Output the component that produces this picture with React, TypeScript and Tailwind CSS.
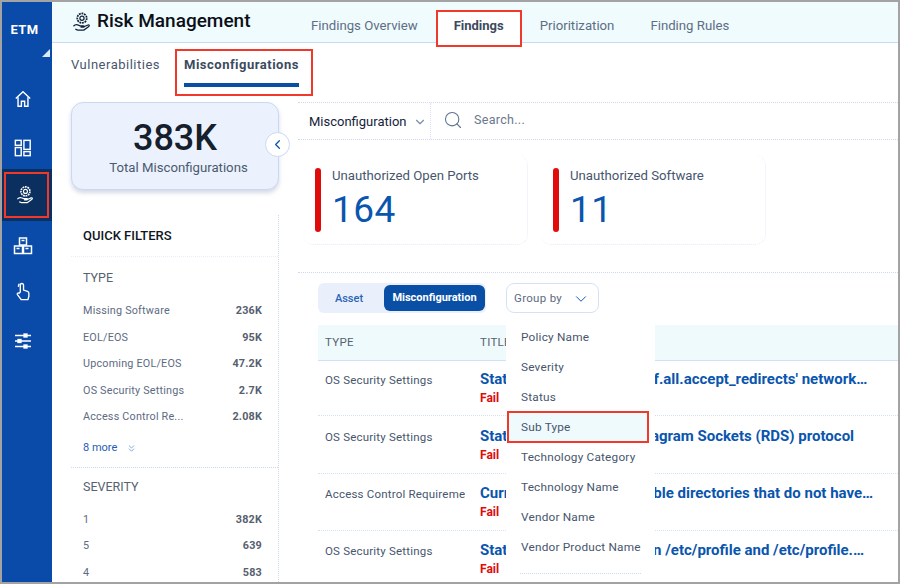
import { ChevronDown, ChevronLeft, ChevronsDown, Search } from "lucide-react";

const TOP_TABS = ["Findings Overview", "Findings", "Prioritization", "Finding Rules"];

const TYPE_FILTERS = [
  ["Missing Software", "236K"],
  ["EOL/EOS", "95K"],
  ["Upcoming EOL/EOS", "47.2K"],
  ["OS Security Settings", "2.7K"],
  ["Access Control Re...", "2.08K"],
];

const SEVERITY_FILTERS = [
  ["1", "382K"],
  ["5", "639"],
  ["4", "583"],
];

const ROWS = [
  ["OS Security Settings", "Status of the net.ipv4.conf.all.accept_redirects' network…", "h-[55px] pt-[10px]"],
  ["OS Security Settings", "Status of the Reliable Datagram Sockets (RDS) protocol", "h-[58px] pt-[12px]"],
  ["Access Control Requirements", "Current list of world-writable directories that do not have…", "h-[57px] pt-[11px]"],
  ["OS Security Settings", "Status of 'umask' setting in /etc/profile and /etc/profile.…", "h-[57px] pt-[11px]"],
];

const GROUP_OPTIONS = [
  "Policy Name",
  "Severity",
  "Status",
  "Sub Type",
  "Technology Category",
  "Technology Name",
  "Vendor Name",
  "Vendor Product Name",
];

function HandGear({ className }: { className?: string }) {
  return (
    <svg viewBox="0 0 20 20" fill="none" stroke="currentColor" strokeWidth="1.300" className={className}>
      <circle cx="10.500" cy="6" r="5" strokeDasharray="2 0.800" strokeWidth="1.800" />
      <circle cx="10.500" cy="6" r="2.200" />
      <path d="M1.500 14.500c1.500-1.600 3-2 4.500-1.400l2.500.9h3.500c1 0 1 1.500 0 1.500H9" />
      <path d="M12.500 15l4.300-1.800c1.300-.5 1.900.8.900 1.500L12.500 18.500H6L3.500 17.500" />
    </svg>
  );
}

function NavIcons() {
  return (
    <>
      <div className="h-[42px] flex items-start justify-center pr-[8px] pt-[10px] text-white">
        <svg viewBox="0 0 20 20" fill="none" stroke="currentColor" strokeWidth="1.600" className="w-[18px] h-[18px]">
          <path d="M2 9.500 10 2l8 7.500" />
          <path d="M4.500 8v10h3.700v-5.500h3.600V18h3.700V8" />
        </svg>
      </div>
      <div className="h-[47px] flex items-start justify-center pr-[8px] pt-[17px] text-white">
        <svg viewBox="0 0 20 20" fill="none" stroke="currentColor" strokeWidth="1.600" className="w-[18px] h-[18px]">
          <rect x="1.500" y="1.500" width="6.500" height="5.500" />
          <rect x="1.500" y="9.500" width="6.500" height="9" />
          <rect x="11" y="1.500" width="7" height="10" />
          <rect x="11" y="14" width="7" height="4.500" />
        </svg>
      </div>
      <div className="h-[52px] bg-[#0b2f5e] flex items-center justify-center">
        <div className="w-[45px] h-[46px] mr-[1px] border-2 border-[#f0392b] flex items-center justify-center pr-[3px] text-white">
          <HandGear className="w-[18px] h-[20px]" />
        </div>
      </div>
      <div className="h-[50px] flex items-center justify-center pr-[8px] text-white">
        <svg viewBox="0 0 20 20" fill="none" stroke="currentColor" strokeWidth="1.500" className="w-[20px] h-[20px]">
          <rect x="6.500" y="2" width="7" height="7" />
          <rect x="1.500" y="10" width="8" height="7.500" />
          <rect x="10.500" y="10" width="8" height="7.500" />
          <path d="M8.500 4.500h3M3.500 12.500h3M12.500 12.500h3" />
        </svg>
      </div>
      <div className="h-[40px] flex items-center justify-center pr-[8px] text-white">
        <svg viewBox="0 0 20 20" fill="none" stroke="currentColor" strokeWidth="1.500" className="w-[18px] h-[22px]">
          <path d="M7 11V3.500a1.800 1.800 0 0 1 3.600 0V9l4.400 1.500c1 .4 1.500 1 1.500 2V16l-1 3.500H8L3.800 14c-.8-1.200.7-2.500 1.800-1.500z" />
          <path d="M5 5.500a4 4 0 0 1 1-3.500" />
        </svg>
      </div>
      <div className="h-[44px] flex items-start justify-center pr-[8px] pt-[20px] text-white">
        <svg viewBox="0 0 20 20" fill="none" stroke="currentColor" strokeWidth="1.300" className="w-[20px] h-[20px]">
          <path d="M2 4.500h16M2 10h16M2 15.500h16" />
          <rect x="11" y="3" width="3" height="3" fill="currentColor" />
          <rect x="5" y="8.500" width="3" height="3" fill="currentColor" />
          <rect x="11" y="14" width="3" height="3" fill="currentColor" />
        </svg>
      </div>
    </>
  );
}

function FilterRow({ label, value }: { label: string; value: string }) {
  return (
    <div className="h-[26.500px] flex items-center justify-between pl-[12px] pr-[16px] text-[10.800px] tracking-[0.2px] text-[#5d6b82]">
      <span>{label}</span>
      <span className="font-bold text-[#56606f]">{value}</span>
    </div>
  );
}

function StatCard({ title, value, width }: { title: string; value: string; width: string }) {
  return (
    <div className={`${width} h-[90px] flex pl-[12px] pt-[13px] rounded-[10px] border-b border-r border-dotted border-[#e3ebf8]`}>
      <div className="w-[6px] h-[64px] rounded-full bg-[#e00c0c] shrink-0" />
      <div className="ml-[11px]">
        <div className="text-[13.200px] leading-[16px] text-[#47566e]">{title}</div>
        <div className="mt-[4px] text-[37px] leading-[44px] text-[#0a55ad] tracking-[0.5px]">{value}</div>
      </div>
    </div>
  );
}

export default function App() {
  return (
    <div
      className="w-[900px] h-[584px] overflow-hidden flex border-y-2 border-x-2 border-[#a3a3a3] bg-white"
      style={{ fontFamily: "Roboto, 'Liberation Sans', sans-serif" }}
    >
      {/* Left nav */}
      <aside className="w-[50px] shrink-0 bg-[#0a4aa8] flex flex-col">
        <div className="h-[58px] relative flex items-center justify-center pb-[2px] pr-[5px] text-white font-bold text-[13px] tracking-[0.3px]">
          ETM
          <span className="absolute right-[2px] bottom-[3px] w-0 h-0 border-l-[8px] border-l-transparent border-b-[8px] border-b-[#dbe8f7]" />
        </div>
        <div className="h-[20px]" />
        <NavIcons />
      </aside>

      <div className="flex-1 min-w-0 flex flex-col">
        {/* Header */}
        <header className="h-[41px] shrink-0 bg-[#effbfd] border-b border-[#c6dcf4] flex items-center">
          <div className="w-[21px] ml-[20px] text-[#10203a]">
            <HandGear className="w-[19px] h-[20px]" />
          </div>
          <h1 className="ml-[4px] w-[214px] text-[19px] font-medium text-[#0b0f17] -mt-[1px]">Risk Management</h1>
          <nav className="self-start mt-[8px] h-[37px] flex items-center text-[13.200px] text-[#5e6e84]">
            {TOP_TABS.map((tab) =>
              tab === "Findings" ? (
                <div
                  key={tab}
                  className="relative w-[86px] h-[37px] mx-[18px] border-2 border-[#f0392b] bg-white flex items-center justify-center pb-[5px] font-bold text-[13px] text-[#3c4a5e]"
                >
                  {tab}
                </div>
              ) : (
                <span key={tab} className={tab === "Prioritization" ? "mb-[5px] mr-[36px]" : "mb-[5px]"}>
                  {tab}
                </span>
              ),
            )}
          </nav>
        </header>

        {/* Sub tabs */}
        <div className="h-[59px] shrink-0 flex pl-[19px] text-[13px] leading-[20px] tracking-[0.5px]">
          <span className="mt-[12px] text-[#47566e]">Vulnerabilities</span>
          <div className="ml-[15px] mt-[6px] w-[138px] h-[47px] border-2 border-[#f0392b] pl-[7px] pt-[4px]">
            <div className="w-[115px] font-bold text-[#3c4a5e] whitespace-nowrap">Misconfigurations</div>
            <div className="w-[115px] h-[4px] mt-[8px] bg-[#0a4fa6]" />
          </div>
        </div>

        <div className="flex-1 min-h-0 flex">
          {/* Left column */}
          <div className="w-[246px] shrink-0 pl-[19px]">
            <div className="relative w-[208px] h-[88px] rounded-[12px] border border-[#c9d9f3] bg-[#ecf2fd] shadow-[0_3px_4px_rgba(120,130,170,0.3)] flex flex-col items-center pt-[13px]">
              <div className="text-[36px] leading-[44px] font-medium text-[#16202c]">383K</div>
              <div className="ml-[7px] text-[13.200px] leading-[16px] text-[#4a5a70]">Total Misconfigurations</div>
              <span className="absolute -right-[12px] top-[29px] w-[25px] h-[25px] rounded-full bg-white border border-[#c9d9f3] flex items-center justify-center text-[#0a55ad]">
                <ChevronLeft size={15} />
              </span>
            </div>

            <div className="mt-[25px] w-[208px] border-r border-dotted border-[#c9d9f3]">
              <div className="h-[42px] flex items-center pl-[12px] border-b border-dotted border-[#e6eef8] text-[13px] font-medium text-[#10161f]">
                QUICK FILTERS
              </div>
              <div className="pt-[11px] pb-[1px] pl-[12px] text-[12.500px] leading-[20px] text-[#55626f]">TYPE</div>
              <div className="pt-[9px]">
                {TYPE_FILTERS.map(([label, value]) => (
                  <FilterRow key={label} label={label} value={value} />
                ))}
              </div>
              <div className="h-[37px] flex items-center pl-[12px] pb-[1px] text-[11px] text-[#1f5db5] border-b border-dotted border-[#c9d9f3]">
                8 more
                <ChevronsDown size={11} className="ml-[9px] text-[#7aa3dc]" />
              </div>
              <div className="pt-[9px] pl-[12px] text-[12.500px] leading-[20px] text-[#55626f]">SEVERITY</div>
              <div className="pt-[10px]">
                {SEVERITY_FILTERS.map(([label, value]) => (
                  <FilterRow key={label} label={label} value={value} />
                ))}
              </div>
            </div>
          </div>

          {/* Right column */}
          <div className="flex-1 min-w-0">
            <div className="h-[38px] flex items-center border-y border-dotted border-[#cfd8f0] text-[13px]">
              <div className="w-[133px] h-full pl-[11px] pt-[1px] flex items-center border-r border-dotted border-[#d9e1f3] text-[#16233a]">
                Misconfiguration
                <ChevronDown size={14} className="ml-[6px] text-[#7b8ea8]" />
              </div>
              <Search size={20} strokeWidth={1.300} className="ml-[12px] -mt-[2px] text-[#5b7290]" />
              <span className="ml-[11px] -mt-[2px] text-[12.500px] tracking-[0.3px] text-[#68788e]">Search...</span>
            </div>

            <div className="flex gap-[13px] pl-[5px] mt-[15px]">
              <StatCard title="Unauthorized Open Ports" value="164" width="w-[225px]" />
              <StatCard title="Unauthorized Software" value="11" width="w-[225px]" />
            </div>

            <div className="relative mt-[27px] border-t border-dotted border-[#cfd8f0] pl-[20px] pt-[10px]">
              <div className="flex items-start">
                <div className="w-[168px] h-[30px] rounded-[6px] bg-[#e9f0fc] flex text-[11px]">
                  <div className="w-[62px] pt-[2px] flex items-center justify-center font-medium text-[#2a64b4]">Asset</div>
                  <div className="ml-[4px] w-[101px] my-[2px] pt-[1px] rounded-[6px] bg-[#0a4fa6] flex items-center justify-center font-bold text-white">
                    Misconfiguration
                  </div>
                </div>
                <div className="ml-[20px] w-[93px] h-[30px] rounded-[8px] border border-[#d5e2f5] pl-[7px] flex items-center text-[11.500px] tracking-[0.3px] text-[#5d6b82]">
                  <span className="mt-[1px]">Group by</span>
                  <ChevronDown size={18} strokeWidth={1.300} className="ml-[10px] mt-[2px] text-[#0a55ad]" />
                </div>
              </div>

              <div className="mt-[12px] h-[36px] bg-[#eefafc] border-b border-[#cfe3f5] flex items-center text-[11.500px] tracking-[0.3px] text-[#55626f]">
                <span className="w-[162px] pl-[7px]">TYPE</span>
                <span>TITLE</span>
              </div>

              {ROWS.map(([type, title, height]) => (
                <div key={title} className={`${height} flex border-b border-dotted border-[#d5e2f5]`}>
                  <div className="w-[147px] mr-[15px] mt-[1px] pl-[7px] text-[11.500px] leading-[16px] tracking-[0.2px] text-[#47566e] whitespace-nowrap overflow-hidden">
                    {type}
                  </div>
                  <div className="whitespace-nowrap">
                    <div className="text-[15px] leading-[16px] font-bold text-[#0a55ad]">{title}</div>
                    <div className="mt-[2px] text-[12px] leading-[18px] font-bold text-[#e00c0c]">Fail</div>
                  </div>
                </div>
              ))}

              {/* Group by menu */}
              <div className="absolute left-[208px] top-[47px] w-[149px] h-[256px] bg-white pt-[3px] text-[11.800px] tracking-[0.2px] text-[#47566e]">
                {GROUP_OPTIONS.map((option) =>
                  option === "Sub Type" ? (
                    <div
                      key={option}
                      className="h-[32px] -mt-[2px] w-[142px] ml-px pl-[12px] pt-[2px] flex items-center border-2 border-[#f0392b] bg-[#eefafc]"
                    >
                      {option}
                    </div>
                  ) : (
                    <div key={option} className="h-[30px] pl-[15px] flex items-center whitespace-nowrap">
                      {option}
                    </div>
                  ),
                )}
                <div className="mt-[10px] mx-[14px] border-t border-dotted border-[#c9d9f3]" />
              </div>
            </div>
          </div>
        </div>
      </div>
    </div>
  );
}
